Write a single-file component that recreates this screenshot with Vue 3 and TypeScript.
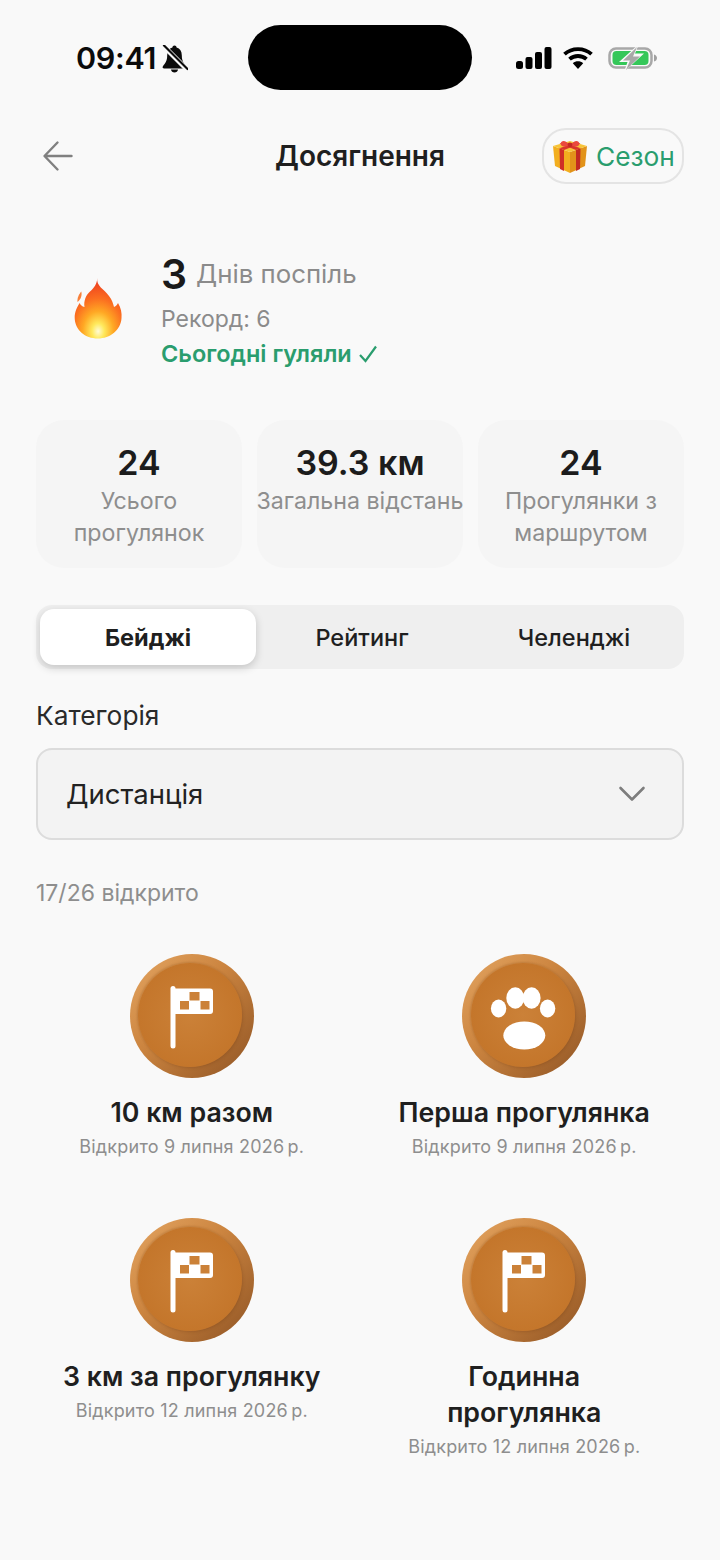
<script setup lang="ts">
interface Stat { value: string; label: string }
interface Badge { title: string; date: string; icon: 'flag' | 'paw' }
const stats: Stat[] = [
  { value: '24', label: 'Усього прогулянок' },
  { value: '39.3 км', label: 'Загальна відстань' },
  { value: '24', label: 'Прогулянки з маршрутом' },
]
const tabs = ['Бейджі', 'Рейтинг', 'Челенджі']
const badges: Badge[] = [
  { title: '10 км разом', date: 'Відкрито 9 липня 2026\u202fр.', icon: 'flag' },
  { title: 'Перша прогулянка', date: 'Відкрито 9 липня 2026\u202fр.', icon: 'paw' },
  { title: '3 км за прогулянку', date: 'Відкрито 12 липня 2026\u202fр.', icon: 'flag' },
  { title: 'Годинна прогулянка', date: 'Відкрито 12 липня 2026\u202fр.', icon: 'flag' },
]
</script>

<template>
  <div class="page">
    <div class="status">
      <div class="status-left">
        <span class="time">09:41</span>
        <svg width="26" height="28" viewBox="0 0 26 28" class="bell">
          <path d="M12.500 0.500c-1.200 0-2 .8-2.100 1.900C7 3.400 5.200 6.300 5.200 10.200c0 3.500-.6 6.300-2.600 8.700-1.300 1.600-2 2.600-2 3.300 0 .7.500 1.200 1.400 1.200h21c.9 0 1.400-.5 1.400-1.200 0-.7-.7-1.700-2-3.300-2-2.400-2.600-5.200-2.600-8.700 0-3.900-1.800-6.800-5.200-7.800-.1-1.100-.9-1.900-2.100-1.900z" fill="#0b0b0b"/>
          <path d="M9 24.500h7c-.2 1.800-1.700 3-3.500 3S9.200 26.300 9 24.500z" fill="#0b0b0b"/>
          <path d="M2 1.500l23.500 23.500" stroke="#f9f9f9" stroke-width="5"/>
          <path d="M2 0.500l23.500 23.500" stroke="#0b0b0b" stroke-width="2.200" stroke-linecap="round"/>
        </svg>
      </div>
      <div class="island"></div>
      <div class="status-right">
        <svg width="36" height="24" viewBox="0 0 36 24">
          <rect x="0" y="15" width="7" height="8" rx="2.500" fill="#000"/>
          <rect x="9.500" y="11" width="7" height="12" rx="2" fill="#000"/>
          <rect x="19" y="6" width="7" height="17" rx="2" fill="#000"/>
          <rect x="28.500" y="1" width="7" height="22" rx="2" fill="#000"/>
        </svg>
        <svg width="30" height="24" viewBox="0 0 30 24" class="wifi">
          <path d="M1.500 8.200C8.800 1.400 21.200 1.400 28.500 8.200" fill="none" stroke="#000" stroke-width="3.800"/>
          <path d="M6.500 13.200c4.800-4.300 12.200-4.300 17 0" fill="none" stroke="#000" stroke-width="3.800"/>
          <path d="M9.800 17.200c3-2.600 7.400-2.600 10.400 0L15 23z" fill="#000"/>
        </svg>
        <svg width="50" height="26" viewBox="0 0 50 26">
          <rect x="1.500" y="3.500" width="42" height="19" rx="6.500" fill="none" stroke="#a8a8a8" stroke-width="2.500"/>
          <rect x="4.500" y="6" width="36" height="14" rx="4" fill="#35c759"/>
          <path d="M46 9.500c2 .5 3 2 3 3.500s-1 3-3 3.500z" fill="#a0a0a0"/>
          <path d="M31 -1L11 17h8.500l-3.500 10 20-18.500h-9z" fill="#f9f9f9"/>
          <path d="M29 2L15 15.500h7L18 25l14-13.500h-7z" fill="#a8a8a8"/>
        </svg>
      </div>
    </div>

    <header class="head">
      <svg class="back" width="32" height="32" viewBox="0 0 32 32">
        <path d="M29.500 16H3M15.500 2.500L2.500 16l13 13.500" fill="none" stroke="#808080" stroke-width="2.400" stroke-linecap="round" stroke-linejoin="round"/>
      </svg>
      <h1 class="title">Досягнення</h1>
      <div class="season">
        <svg width="34" height="34" viewBox="0 0 34 34">
          <path d="M0 7l17 6v21L2 27z" fill="#f2ae1f"/>
          <path d="M34 7l-17 6v21l15-7z" fill="#e2931a"/>
          <path d="M0 7l17-5 17 5-17 6z" fill="#f7c438"/>
          <path d="M6.500 9.300l4.500 1.600V32l-4-2z" fill="#cf2f26"/>
          <path d="M27.500 9.300L23 10.900V32l4-2z" fill="#c22a22"/>
          <path d="M6.500 9.300l4.500 1.600 16.500-6.400-4.500-1.300z" fill="#d9362c"/>
          <path d="M27.500 9.300L23 10.900 6.500 4.500 11 3.200z" fill="#d9362c"/>
          <path d="M16 6C12 8.500 7.500 8 7.700 4.500 8 1 13.500 1 16 6zM18 6c4 2.500 8.500 2 8.300-1.500C26 1 20.500 1 18 6z" fill="#ea4a3e"/>
          <circle cx="17" cy="5.800" r="2.400" fill="#c52b24"/>
        </svg>
        <span>Сезон</span>
      </div>
    </header>

    <section class="streak">
      <svg class="flame" width="50" height="62" viewBox="0 0 50 62">
        <defs>
          <radialGradient id="fl" cx="50%" cy="88%" r="82%">
            <stop offset="0" stop-color="#fffbd6"/>
            <stop offset=".16" stop-color="#ffe95c"/>
            <stop offset=".4" stop-color="#ffa824"/>
            <stop offset=".66" stop-color="#fb6f20"/>
            <stop offset="1" stop-color="#ee3f1f"/>
          </radialGradient>
        </defs>
        <path d="M23.300 1C22 9 30 12 35 19c3 4 4 7 5 11 2-1 3.500-2.500 4-4 3 5 4 10 3.500 15C47 53 36 61.500 24 61.500 11 61.500 1 53 .7 41c-.2-6 2.300-11 5-15 .8 2 2.300 3.500 4.800 4-1-6 1.500-12 5.500-15.500C20 11 23 7 23.300 1z" fill="url(#fl)"/>
        <path d="M3.500 25c-.5-4 1.500-8 3.800-10.500 1 4-.5 8-3.800 10.500z" fill="#f8803a"/>
      </svg>
      <div class="streak-info">
        <div class="streak-top"><span class="streak-num">3</span><span class="streak-lbl">Днів поспіль</span></div>
        <div class="record">Рекорд: 6</div>
        <div class="today">Сьогодні гуляли <svg width="20" height="18" viewBox="0 0 20 18"><path d="M2 10l5.500 6L18 1.500" fill="none" stroke="#2a9d6e" stroke-width="2.200"/></svg></div>
      </div>
    </section>

    <section class="stats">
      <div v-for="s in stats" :key="s.label" class="stat">
        <div class="stat-val">{{ s.value }}</div>
        <div class="stat-lbl">{{ s.label }}</div>
      </div>
    </section>

    <nav class="tabs">
      <div v-for="(t, i) in tabs" :key="t" class="tab" :class="{ active: i === 0 }">{{ t }}</div>
    </nav>

    <div class="cat-label">Категорія</div>
    <div class="select">
      <span>Дистанція</span>
      <svg width="28" height="18" viewBox="0 0 28 18"><path d="M2.500 3L14 14.500 25.500 3" fill="none" stroke="#7d7d7d" stroke-width="2.600" stroke-linecap="round" stroke-linejoin="round"/></svg>
    </div>
    <div class="count">17/26 відкрито</div>

    <section class="grid">
      <div v-for="b in badges" :key="b.title" class="badge">
        <div class="medal">
          <div class="medal-in"></div>
          <svg v-if="b.icon === 'flag'" width="124" height="124" viewBox="0 0 124 124" class="medal-svg">
            <path d="M43 34.500V92" stroke="#fff" stroke-width="5" stroke-linecap="round" fill="none"/>
            <path d="M45 34.500h35c2 0 3 1 3 3v19.500c0 2-1 3-3 3H45z" fill="#fff"/>
            <rect x="50" y="47" width="9" height="8.500" fill="#cb8138"/>
            <rect x="59.500" y="38" width="10" height="8.500" fill="#cb8138"/>
            <rect x="70.500" y="47" width="9" height="8.500" fill="#cb8138"/>
          </svg>
          <svg v-else width="124" height="124" viewBox="0 0 124 124" class="medal-svg">
            <ellipse cx="36.600" cy="54.500" rx="7.700" ry="9" fill="#fff"/>
            <ellipse cx="53.300" cy="44" rx="9" ry="10.700" fill="#fff"/>
            <ellipse cx="69.600" cy="44" rx="9" ry="10.700" fill="#fff"/>
            <ellipse cx="85.600" cy="54.500" rx="7.700" ry="9" fill="#fff"/>
            <ellipse cx="62.300" cy="81.500" rx="21" ry="14" fill="#fff"/>
          </svg>
        </div>
        <div class="b-title">{{ b.title }}</div>
        <div class="b-date">{{ b.date }}</div>
      </div>
    </section>
  </div>
</template>

<style>
html, body { margin: 0; background: #f9f9f9; }
</style>

<style scoped>
.page {
  width: 720px;
  height: 1560px;
  overflow: hidden;
  background: #f9f9f9;
  font-family: Inter, "Noto Sans", sans-serif;
  color: #1c1c1c;
  box-sizing: border-box;
  position: relative;
}
.status {
  height: 128px;
  box-sizing: border-box;
  padding: 25px 62px 0 76px;
  display: flex;
  justify-content: space-between;
  align-items: flex-start;
}
.status-left { display: flex; align-items: center; gap: 6px; height: 65px; }
.time { font-size: 30.500px; font-weight: 600; color: #0b0b0b; letter-spacing: -0.3px; }
.bell { margin-top: 2px; }
.island {
  position: absolute;
  left: 248px;
  top: 25px;
  width: 224px;
  height: 65px;
  border-radius: 33px;
  background: #000;
}
.status-right { display: flex; align-items: center; gap: 11px; height: 65px; }
.wifi { margin-right: 4px; }
.head {
  display: flex;
  align-items: center;
  justify-content: space-between;
  height: 56px;
  padding: 0 36px 0 42px;
  position: relative;
}
.title {
  position: absolute;
  left: 0;
  right: 0;
  text-align: center;
  margin: 0;
  font-size: 28px;
  font-weight: 600;
  color: #1f1f1f;
}
.season {
  position: relative;
  display: flex;
  align-items: center;
  gap: 9px;
  height: 56px;
  width: 142px;
  box-sizing: border-box;
  padding-left: 9px;
  border: 2px solid #e4e4e4;
  border-radius: 24px;
  font-size: 26.300px;
  color: #2a9d6e;
  white-space: nowrap;
}
.streak {
  display: flex;
  align-items: center;
  margin-top: 64px;
  padding-left: 74px;
  gap: 37px;
  height: 124px;
}
.flame { margin-top: -5px; }
.streak-info { display: flex; flex-direction: column; }
.streak-top { display: flex; align-items: center; gap: 9px; height: 44px; margin-top: 4px; }
.streak-num { font-size: 41px; font-weight: 600; line-height: 44px; color: #1a1a1a; }
.streak-lbl { font-size: 25.800px; line-height: 44px; color: #8b8b8b; }
.record { font-size: 23px; color: #8b8b8b; margin-top: 5px; line-height: 36px; }
.today { font-size: 23.500px; font-weight: 600; color: #2a9d6e; line-height: 36px; display: flex; align-items: center; gap: 6px; margin-top: -1px; }
.stats {
  display: grid;
  grid-template-columns: repeat(3, 206px);
  column-gap: 15px;
  margin: 48px 36px 0;
}
.stat {
  height: 148px;
  box-sizing: border-box;
  padding-top: 20px;
  background: #f5f5f5;
  border-radius: 28px;
  text-align: center;
}
.stat-val { font-size: 34px; font-weight: 600; line-height: 46px; color: #1c1c1c; }
.stat-lbl { font-size: 23.200px; line-height: 32px; color: #8e8e8e; margin: -1px -2px 0; }
.tabs {
  margin: 37px 36px 0;
  height: 64px;
  background: #efefef;
  border-radius: 16px;
  display: grid;
  grid-template-columns: 220px 204px 1fr;
  padding: 4px 0 4px 4px;
  box-sizing: border-box;
}
.tab {
  display: flex;
  align-items: center;
  justify-content: center;
  font-size: 23.500px;
  font-weight: 500;
  color: #1f1f1f;
  border-radius: 14px;
}
.tab.active {
  background: #fff;
  font-weight: 700;
  font-size: 23.500px;
  margin-right: 4px;
  box-shadow: 0 3px 8px rgba(0,0,0,.18);
}
.cat-label { margin: 32px 36px 0; font-size: 26.300px; line-height: 30px; color: #2a2a2a; }
.select {
  margin: 17px 36px 0;
  height: 92px;
  box-sizing: border-box;
  background: #f3f3f3;
  border: 2px solid #dcdcdc;
  border-radius: 16px;
  display: flex;
  align-items: center;
  justify-content: space-between;
  padding: 0 36px 0 28px;
  font-size: 27.500px;
  color: #222;
}
.count { margin: 38px 36px 0; font-size: 23px; line-height: 30px; color: #8e8e8e; }
.grid {
  display: grid;
  grid-template-columns: 332.500px 332.500px;
  padding-left: 25.500px;
  margin-top: 46px;
  grid-auto-rows: 264px;
}
.badge { display: flex; flex-direction: column; align-items: center; text-align: center; }
.medal {
  width: 124px;
  height: 124px;
  border-radius: 50%;
  background: linear-gradient(135deg, #e4a663 0%, #cc8540 42%, #8f5424 100%);
  display: flex;
  align-items: center;
  justify-content: center;
  position: relative;
  flex: none;
}
.medal-in {
  width: 104px;
  height: 104px;
  margin: -3px 0 0 -3px;
  border-radius: 50%;
  background: radial-gradient(circle at 50% 50%, #cb8138 0%, #c4762b 70%, #bf7029 100%);
  box-shadow: -1px -1px 2px rgba(160,95,35,.3), 1px 1px 3px rgba(110,60,20,.25);
}
.medal-svg { position: absolute; left: 0; top: 0; }
.b-title {
  font-size: 26.750px;
  font-weight: 600;
  line-height: 36px;
  margin-top: 16px;
  color: #1f1f1f;
  width: 262px;
}
.b-date { font-size: 18px; line-height: 26px; color: #8e8e8e; margin-top: 4px; white-space: nowrap; letter-spacing: .2px; }
</style>
